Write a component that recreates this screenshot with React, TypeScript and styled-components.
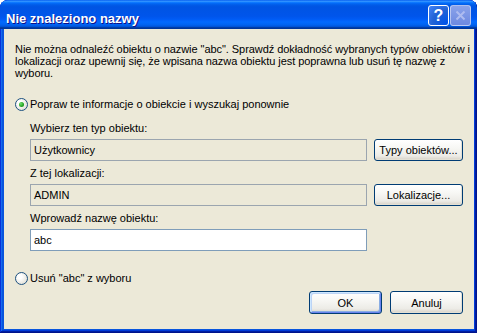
import React from "react";
import styled, { createGlobalStyle } from "styled-components";

const Global = createGlobalStyle`
  html, body { margin: 0; padding: 0; background: #ffffff; }
  body { font-family: "Liberation Sans", Arial, sans-serif; }
  * { box-sizing: border-box; }
`;

const Window = styled.div`
  width: 477px;
  height: 333px;
  display: flex;
  flex-direction: column;
  background: #0855dd;
  border-radius: 8px 8px 0 0;
  box-shadow: inset -1px -1px #00138c, inset 1px 1px #0831d9,
    inset -2px -2px #001ea0, inset 2px 2px #166aee, inset -3px -3px #003bda,
    inset 3px 3px #0855dd;
  overflow: hidden;
`;

const TitleBar = styled.div`
  height: 29px;
  flex: none;
  display: flex;
  align-items: flex-start;
  padding: 0 6px 0 6px;
  border-radius: 7px 7px 0 0;
  background: linear-gradient(
    180deg,
    #0058ee 0%,
    #3593ff 4%,
    #288eff 6%,
    #127dff 8%,
    #036ffc 10%,
    #0262ee 14%,
    #0057e5 20%,
    #0054e3 24%,
    #0055eb 56%,
    #005bf5 66%,
    #026afe 76%,
    #0062ef 86%,
    #0052d6 92%,
    #0040ab 94%,
    #003092 100%
  );
`;

const Title = styled.div`
  flex: 1;
  margin-top: 11px;
  line-height: 15px;
  font-size: 13px;
  font-weight: bold;
  color: #ffffff;
  text-shadow: 1px 1px #0f1089;
  white-space: nowrap;
`;

const TitleButton = styled.div<{ $disabled?: boolean }>`
  width: 21px;
  height: 21px;
  margin-top: 5px;
  margin-left: 1px;
  border-radius: 3px;
  border: 1px solid ${(p) => (p.$disabled ? "rgba(255,255,255,0.45)" : "#ffffff")};
  background: ${(p) =>
    p.$disabled
      ? "linear-gradient(180deg, #8aa2ea 0%, #6d89e0 100%)"
      : "radial-gradient(circle at 90% 90%, #0054e9 0%, #2263d5 55%, #4484f8 100%)"};
  display: flex;
  align-items: center;
  justify-content: center;
  color: #ffffff;
  font-weight: bold;
  font-size: 16px;
  line-height: 1;
`;

const Body = styled.div`
  flex: 1;
  margin: 0 3px 4px 4px;
  background: #ece9d8;
  padding: 14px 11px 15px 11px;
  display: flex;
  flex-direction: column;
  font-size: 11px;
  color: #000000;
`;

const Description = styled.div`
  line-height: 12px;
  letter-spacing: -0.06px;
  white-space: nowrap;
`;

const RadioRow = styled.label<{ $top: number }>`
  display: flex;
  align-items: center;
  height: 13px;
  margin-top: ${(p) => p.$top}px;
  gap: 2px;
  white-space: nowrap;
  line-height: 13px;
`;

const RadioCircle = styled.span<{ $checked?: boolean }>`
  width: 13px;
  height: 13px;
  flex: none;
  border-radius: 50%;
  border: 1px solid #1c5180;
  background: radial-gradient(circle at 35% 35%, #ffffff 20%, #e6e5dd 70%, #d3d2c8 100%);
  display: flex;
  align-items: center;
  justify-content: center;
  &::after {
    content: "";
    display: ${(p) => (p.$checked ? "block" : "none")};
    width: 5px;
    height: 5px;
    border-radius: 50%;
    background: radial-gradient(circle at 35% 35%, #6fe06f 0%, #21a121 60%, #0d810d 100%);
  }
`;

const Indent = styled.div`
  margin-left: 15px;
  display: flex;
  flex-direction: column;
`;

const Label = styled.div<{ $top: number }>`
  line-height: 12px;
  margin-top: ${(p) => p.$top}px;
  white-space: nowrap;
`;

const FieldRow = styled.div`
  display: flex;
  gap: 7px;
  margin-top: 5px;
  height: 22px;
`;

const Field = styled.div<{ $readonly?: boolean }>`
  flex: none;
  width: 337px;
  height: 22px;
  border: 1px solid ${(p) => (p.$readonly ? "#9ba5af" : "#7f9db9")};
  background: ${(p) => (p.$readonly ? "#ece9d8" : "#ffffff")};
  padding: 0 3px;
  display: flex;
  align-items: center;
  white-space: nowrap;
`;

const Button = styled.div<{ $width: number; $default?: boolean }>`
  width: ${(p) => p.$width}px;
  height: ${(p) => (p.$default !== undefined ? 23 : 22)}px;
  flex: none;
  border: 1px solid #003c74;
  border-radius: 3px;
  background: linear-gradient(180deg, #ffffff 0%, #f7f7f4 40%, #ecebe6 80%, #d6d0c5 100%);
  box-shadow: ${(p) =>
    p.$default
      ? "inset 1px 1px #cee7ff, inset -1px -1px #6982ee, inset 2px 2px #bcd4f6, inset -2px -2px #89ade4"
      : "inset -1px -1px #e3e0d4"};
  display: flex;
  align-items: center;
  justify-content: center;
  white-space: nowrap;
`;

const Footer = styled.div`
  margin-top: auto;
  display: flex;
  justify-content: flex-end;
  gap: 8px;
`;

export default function App() {
  return (
    <>
      <Global />
      <Window>
        <TitleBar>
          <Title>Nie znaleziono nazwy</Title>
          <TitleButton>?</TitleButton>
          <TitleButton $disabled>
            <svg width="11" height="11" viewBox="0 0 11 11">
              <path d="M1.5 1.5 L9.5 9.5 M9.5 1.5 L1.5 9.5" stroke="#aebcf0" strokeWidth="2" />
            </svg>
          </TitleButton>
        </TitleBar>
        <Body>
          <Description>
            Nie można odnaleźć obiektu o nazwie "abc". Sprawdź dokładność wybranych typów obiektów i
            <br />
            lokalizacji oraz upewnij się, że wpisana nazwa obiektu jest poprawna lub usuń tę nazwę z
            <br />
            wyboru.
          </Description>
          <RadioRow $top={19}>
            <RadioCircle $checked />
            Popraw te informacje o obiekcie i wyszukaj ponownie
          </RadioRow>
          <Indent>
            <Label $top={11}>Wybierz ten typ obiektu:</Label>
            <FieldRow>
              <Field $readonly>Użytkownicy</Field>
              <Button $width={89}>Typy obiektów...</Button>
            </FieldRow>
            <Label $top={6}>Z tej lokalizacji:</Label>
            <FieldRow>
              <Field $readonly>ADMIN</Field>
              <Button $width={89}>Lokalizacje...</Button>
            </FieldRow>
            <Label $top={6}>Wprowadź nazwę obiektu:</Label>
            <FieldRow>
              <Field>abc</Field>
            </FieldRow>
          </Indent>
          <RadioRow $top={21}>
            <RadioCircle />
            Usuń "abc" z wyboru
          </RadioRow>
          <Footer>
            <Button $width={73} $default>
              OK
            </Button>
            <Button $width={73} $default={false}>
              Anuluj
            </Button>
          </Footer>
        </Body>
      </Window>
    </>
  );
}
